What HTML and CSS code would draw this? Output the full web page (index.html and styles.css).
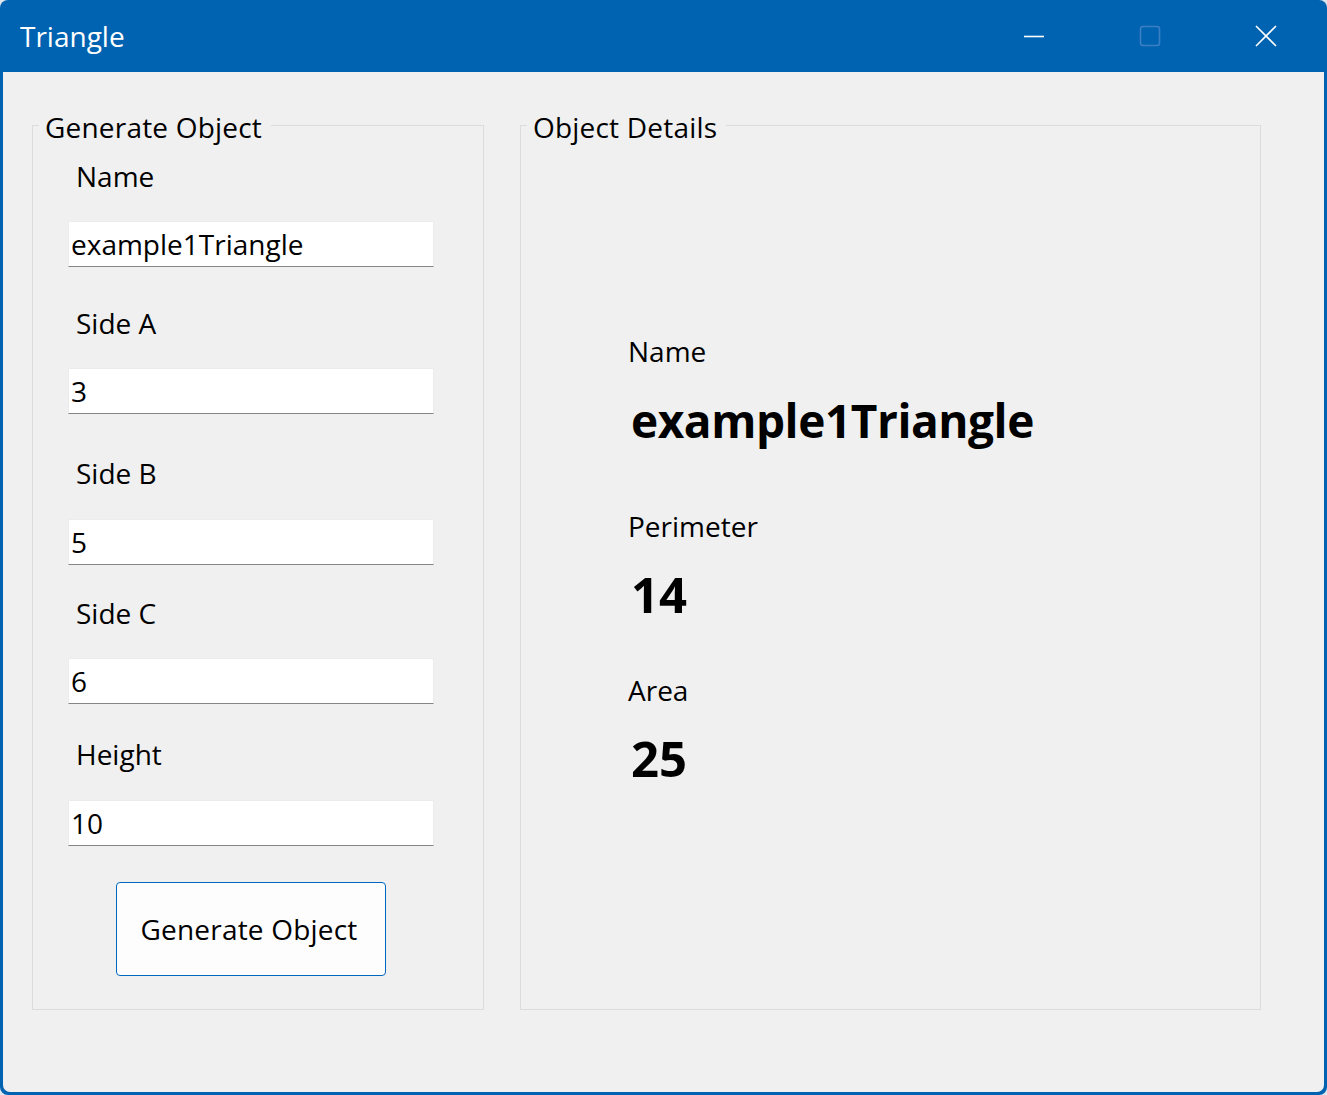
FILE: index.html
```html
<!DOCTYPE html>
<html lang="en">
<head>
<meta charset="utf-8">
<title>Triangle</title>
<link rel="stylesheet" href="styles.css">
</head>
<body>
<div class="window">
  <div class="titlebar">
    <div class="title">Triangle</div>
    <div class="controls">
      <div class="ctl">
        <svg width="22" height="22" viewBox="0 0 22 22"><line x1="1" y1="11.5" x2="21" y2="11.5" stroke="#ffffff" stroke-width="1.6"/></svg>
      </div>
      <div class="ctl">
        <svg width="22" height="22" viewBox="0 0 22 22"><rect x="1.5" y="1.5" width="19" height="19" rx="2.5" fill="none" stroke="#3a7fc4" stroke-width="1.6"/></svg>
      </div>
      <div class="ctl">
        <svg width="22" height="22" viewBox="0 0 22 22"><path d="M1 1 L21 21 M21 1 L1 21" stroke="#ffffff" stroke-width="1.6" fill="none"/></svg>
      </div>
    </div>
  </div>
  <div class="client">
    <div class="group group-generate">
      <span class="legend">Generate Object</span>
      <div class="form">
        <div class="label">Name</div>
        <input class="field" type="text" value="example1Triangle">
        <div class="label label-side-a">Side A</div>
        <input class="field" type="text" value="3">
        <div class="label label-side-b">Side B</div>
        <input class="field field-b" type="text" value="5">
        <div class="label label-side-c">Side C</div>
        <input class="field" type="text" value="6">
        <div class="label label-height">Height</div>
        <input class="field field-b" type="text" value="10">
        <button class="btn" type="button">Generate Object</button>
      </div>
    </div>
    <div class="group group-details">
      <span class="legend">Object Details</span>
      <div class="details">
        <div class="label">Name</div>
        <div class="value value-name">example1Triangle</div>
        <div class="label label-perimeter">Perimeter</div>
        <div class="value value-num">14</div>
        <div class="label label-area">Area</div>
        <div class="value value-num">25</div>
      </div>
    </div>
  </div>
</div>
</body>
</html>
```

FILE: styles.css
```css
html, body {
  margin: 0;
  padding: 0;
}
body {
  background: #dfe6ec;
  font-family: "Open Sans", "Noto Sans", sans-serif;
  color: #000;
}
.window {
  width: 1327px;
  height: 1095px;
  box-sizing: border-box;
  background: #0063b1;
  border-radius: 8px;
  padding: 0 3px 3px 3px;
  display: flex;
  flex-direction: column;
}
.titlebar {
  height: 72px;
  flex: 0 0 72px;
  display: flex;
  align-items: center;
  justify-content: space-between;
}
.title {
  color: #fff;
  font-size: 28px;
  line-height: 38px;
  padding-left: 17px;
}
.controls {
  display: flex;
  height: 72px;
}
.ctl {
  width: 116px;
  height: 72px;
  display: flex;
  align-items: center;
  justify-content: center;
}
.ctl svg {
  display: block;
}
.client {
  flex: 1;
  background: #f0f0f0;
  border-radius: 0 0 7px 7px;
  display: flex;
  align-items: flex-start;
  gap: 36px;
  padding: 53px 0 0 29px;
}
.group {
  position: relative;
  border: 1px solid #dcdcdc;
  box-sizing: border-box;
  height: 885px;
}
.group-generate {
  width: 452px;
}
.group-details {
  width: 741px;
}
.legend {
  position: absolute;
  top: -18px;
  left: 6px;
  padding: 0 9px 0 6px;
  background: #f0f0f0;
  font-size: 28px;
  line-height: 38px;
  letter-spacing: 0.2px;
  white-space: nowrap;
}
.form {
  padding: 31px 0 0 35px;
}
.label {
  font-size: 28px;
  line-height: 38px;
  margin-left: 8px;
}
.label-side-a { margin-top: 37px; }
.label-side-b { margin-top: 40px; }
.label-side-c { margin-top: 29px; }
.label-height { margin-top: 31px; }
.field {
  display: block;
  width: 366px;
  height: 46px;
  margin: 26px 0 0 0;
  box-sizing: border-box;
  padding: 0 2px;
  border: 1px solid #ececec;
  border-bottom: 1px solid #858585;
  background: #fff;
  font-family: "Open Sans", "Noto Sans", sans-serif;
  font-size: 28px;
  color: #000;
  outline: none;
}
.field-b { margin-top: 27px; }
.btn {
  display: block;
  margin: 36px 0 0 48px;
  width: 270px;
  height: 94px;
  box-sizing: border-box;
  background: #fdfdfd;
  border: 1px solid #0067c0;
  border-radius: 4px;
  font-family: "Open Sans", "Noto Sans", sans-serif;
  font-size: 28px;
  letter-spacing: 0.2px;
  color: #000;
  padding: 0 4px 0 0;
}
.details {
  padding: 206px 0 0 107px;
}
.details .label {
  margin-left: 0;
}
.value {
  font-weight: 700;
  line-height: 60px;
  margin-left: 3px;
}
.value-name {
  font-size: 46px;
  letter-spacing: -0.45px;
  margin-top: 20px;
}
.value-num {
  font-size: 49px;
  margin-top: 19px;
}
.label-perimeter { margin-top: 57px; }
.label-area { margin-top: 47px; }
```
